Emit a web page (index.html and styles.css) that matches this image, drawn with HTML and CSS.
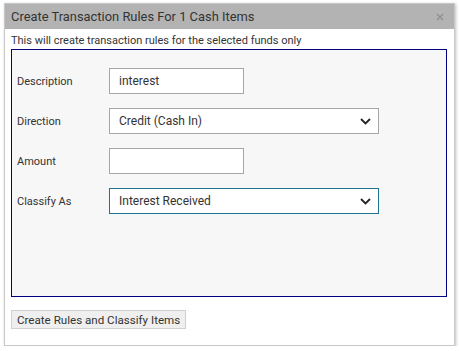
FILE: index.html
```html
<!DOCTYPE html>
<html>
<head>
    <title>Create Transaction Rules</title>
    <link rel="stylesheet" href="styles.css">
</head>
<body>

<div class="dialog">
    <div class="dialog-header">
        <span class="dialog-title">Create Transaction Rules For 1 Cash Items</span>
        <svg class="dialog-close" width="8" height="8" viewBox="0 0 8 8"><path d="M1 1l6 6M7 1l-6 6" stroke="#8f8f8f" stroke-width="1.4"/></svg>
    </div>
    <div class="dialog-body">
        <p class="note">This will create transaction rules for the selected funds only</p>
        <div class="rules-panel">
            <div class="form-row">
                <label for="rule-description">Description</label>
                <input type="text" id="rule-description" class="field short" value="interest">
            </div>
            <div class="form-row">
                <label for="rule-direction">Direction</label>
                <div class="field long select">
                    <span>Credit (Cash In)</span>
                    <svg width="11" height="7" viewBox="0 0 11 7"><path d="M1 1l4.5 4.5L10 1" fill="none" stroke="#222" stroke-width="1.8"/></svg>
                </div>
            </div>
            <div class="form-row">
                <label for="rule-amount">Amount</label>
                <input type="text" id="rule-amount" class="field short">
            </div>
            <div class="form-row">
                <label for="rule-classify">Classify As</label>
                <div class="field long select focused">
                    <span>Interest Received</span>
                    <svg width="11" height="7" viewBox="0 0 11 7"><path d="M1 1l4.5 4.5L10 1" fill="none" stroke="#222" stroke-width="1.8"/></svg>
                </div>
            </div>
        </div>
        <button class="action-btn">Create Rules and Classify Items</button>
    </div>
</div>

</body>
</html>
```
FILE: styles.css
```css
body {
    margin: 0;
    background: #fff;
    font-family: Roboto, "Liberation Sans", sans-serif;
    color: #333;
}

.dialog {
    margin: 3px 0 0 4px;
    width: 449px;
    height: 341px;
    border: 1px solid #c8c8c8;
    background: #fff;
    box-shadow: 1px 1px 3px rgba(0, 0, 0, 0.25);
}

.dialog-header {
    height: 25px;
    background: #b3b3b3;
    display: flex;
    align-items: center;
    justify-content: space-between;
    padding: 0 10px 0 6px;
}

.dialog-title {
    font-size: 12.9px;
    color: #333;
}

.dialog-close {
    display: block;
}

.dialog-body {
    padding: 0 7px 0 6px;
}

.note {
    font-size: 11px;
    margin: 5px 0 2px 0;
    line-height: 13px;
}

.rules-panel {
    height: 248px;
    border: 1px solid #000080;
    background: #f7f7f7;
    padding: 18px 0 0 5px;
    box-sizing: border-box;
    display: flex;
    flex-direction: column;
    gap: 14px;
}

.form-row {
    display: flex;
    align-items: center;
}

.form-row label {
    width: 92px;
    font-size: 11px;
    color: #333;
}

.field {
    height: 26px;
    box-sizing: border-box;
    border: 1px solid #a6a6a6;
    background: #fff;
    font-family: Roboto, "Liberation Sans", sans-serif;
    font-size: 12px;
    color: #333;
    padding: 0 9px;
    margin: 0;
    outline: none;
}

.short {
    width: 135px;
}

.long {
    width: 270px;
}

.select {
    display: flex;
    align-items: center;
    justify-content: space-between;
    padding-right: 7px;
}

.focused {
    border-color: #1d7490;
}

.action-btn {
    margin-top: 13px;
    height: 19px;
    padding: 0 5px;
    font-family: Roboto, "Liberation Sans", sans-serif;
    font-size: 11.6px;
    color: #333;
    background: #efefef;
    border: 1px solid #d0d0d0;
    border-radius: 0;
}
```
